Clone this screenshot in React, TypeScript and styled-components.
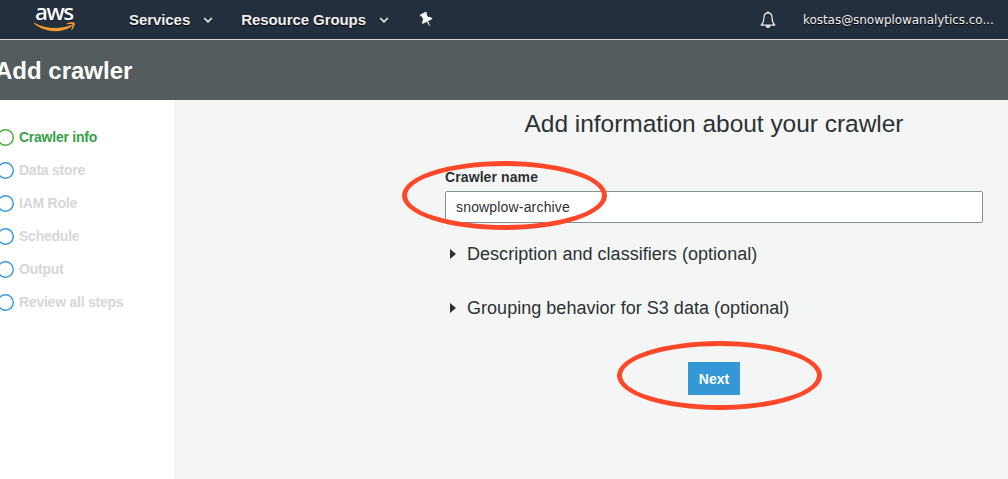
import React from "react";
import styled, { createGlobalStyle } from "styled-components";

const GlobalStyle = createGlobalStyle`
  *, *::before, *::after { box-sizing: border-box; }
  body {
    margin: 0;
    overflow: hidden;
    background: #f4f6f6;
    font-family: "Liberation Sans", Arial, sans-serif;
    color: #2d3133;
  }
`;

const Page = styled.div`
  position: relative;
  display: flex;
  flex-direction: column;
  height: 479px;
  overflow: hidden;
`;

const TopNav = styled.header`
  display: flex;
  align-items: center;
  height: 40px;
  flex: none;
  padding: 0 14px 0 34px;
  background: #242f3e;
  border-bottom: 1px solid #d0d1d6;
  color: #f0f0f0;
`;

const Logo = styled.div`
  display: flex;
  flex-direction: column;
  width: 42px;
  height: 39px;
  margin-right: 53px;
`;

const LogoText = styled.span`
  height: 22px;
  padding-left: 1px;
  font: 500 22.5px/24px "Noto Sans", sans-serif;
  letter-spacing: -1.4px;
  color: #fff;
`;

const NavItem = styled.div<{ $gap: number }>`
  display: flex;
  align-items: center;
  gap: 13px;
  margin-right: ${(p) => p.$gap}px;
  font-size: 15px;
  font-weight: bold;
  line-height: 18px;
  letter-spacing: -0.07px;
  white-space: nowrap;
  text-shadow: 0 1px 1px #000;
`;

const Account = styled.div`
  display: flex;
  align-items: center;
  gap: 27px;
  margin-left: auto;
`;

const Email = styled.span`
  width: 191px;
  font: 12px/18px "DejaVu Sans", Verdana, sans-serif;
  letter-spacing: -0.05px;
  white-space: nowrap;
  text-shadow: 0 1px 1px #000;
`;

const TitleBar = styled.div`
  display: flex;
  align-items: center;
  flex: none;
  height: 60px;
  background: #535b5c;
`;

const Title = styled.h1`
  margin: 2px 0 0 -5px;
  font-size: 24px;
  line-height: 28px;
  color: #fff;
`;

const Body = styled.div`
  display: flex;
  flex: 1;
`;

const Steps = styled.nav`
  display: flex;
  flex-direction: column;
  gap: 16px;
  width: 174px;
  padding-top: 29px;
  background: #fff;
`;

const Step = styled.div<{ $active?: boolean }>`
  display: flex;
  align-items: center;
  gap: 5px;
  height: 17px;
  margin-left: -3px;
  font-size: 14px;
  font-weight: bold;
  letter-spacing: -0.24px;
  line-height: 17px;
  color: ${(p) => (p.$active ? "#37a249" : "#d5d8d8")};
`;

const StepDot = styled.svg<{ $active?: boolean }>`
  width: 17px;
  height: 17px;
  fill: none;
  stroke: ${(p) => (p.$active ? "#4bae3f" : "#3c9bd9")};
  stroke-width: 1.5px;
`;

const Main = styled.main`
  display: flex;
  flex-direction: column;
  flex: 1;
  padding: 0 25px 0 271px;
`;

const Heading = styled.h2`
  align-self: center;
  margin: 10px 0 0;
  font-size: 24.5px;
  font-weight: normal;
  line-height: 28px;
  letter-spacing: -0.03px;
  white-space: nowrap;
`;

const Label = styled.label`
  margin-top: 30px;
  font-size: 14px;
  font-weight: bold;
  line-height: 18px;
  letter-spacing: 0.1px;
`;

const Input = styled.input`
  width: 538px;
  height: 32px;
  margin: 5px 0 0;
  padding: 0 10px;
  border: 1px solid #879192;
  border-radius: 2px;
  background: #fff;
  font: 14px "Liberation Sans", Arial, sans-serif;
  letter-spacing: 0.17px;
  color: #2d3133;
  outline: none;
`;

const Disclosure = styled.div<{ $top: number }>`
  display: flex;
  align-items: center;
  gap: 11px;
  margin-top: ${(p) => p.$top}px;
  padding-left: 5px;
  font-size: 18px;
  line-height: 22px;
  letter-spacing: 0.03px;
  white-space: nowrap;

  &::before {
    content: "";
    border-left: 6px solid #2d3133;
    border-top: 5px solid transparent;
    border-bottom: 5px solid transparent;
  }
`;

const NextButton = styled.button`
  align-self: center;
  width: 52px;
  height: 33px;
  margin: 43px 0 0;
  padding: 0;
  border: 0;
  background: #3498d6;
  color: #fff;
  font: bold 14px "Liberation Sans", Arial, sans-serif;
`;

const Marker = styled.div<{ $x: number; $y: number }>`
  position: absolute;
  left: ${(p) => p.$x}px;
  top: ${(p) => p.$y}px;
  width: 205px;
  height: 69px;
  border: 5px solid #ff4829;
  border-radius: 50%;
  pointer-events: none;
`;

const Chevron = () => (
  <svg width="10" height="8" viewBox="0 0 10 8">
    <path d="M1.2 2l3.8 3.8L8.8 2" fill="none" stroke="#e8e8e8" strokeWidth="1.7" />
  </svg>
);

const Smile = () => (
  <svg width="42" height="11" viewBox="0 0 42 11">
    <path
      d="M.6 .9C11 6.4 25 7.6 36.3 3.2c1.3-.5 2 .7.9 1.5C27 11.2 11 10.8.2 1.8c-.5-.5-.2-1.1.4-.9z"
      fill="#f79a2d"
    />
    <path
      d="M32.8 1.5C35.5-.4 40 .1 40.6.7c.6.8-.2 5.1-2.8 7.2-.4.3-.8.1-.6-.4.6-1.5 1.7-4.2 1.1-4.9-.6-.8-3.5-.6-5-.4-.6.1-.9-.4-.5-.7z"
      fill="#f79a2d"
    />
  </svg>
);

const Pin = () => (
  <svg width="13" height="15" viewBox="0 0 13 15">
    <g fill="#f5f5f5" transform="rotate(-27 6 7)">
      <path d="M2.3.4h7.2v2.3H8.6l.3 3.6c1.8.7 2.8 1.9 2.8 3.6H.6c0-1.7.9-2.9 2.6-3.6l.3-3.6H2.3z" />
      <path d="M5.4 9.8h1.5l-.4 4.9h-.7z" />
    </g>
  </svg>
);

const Bell = () => (
  <svg width="16" height="18" viewBox="0 0 16 18">
    <path
      d="M8 1.8c-2.7 0-4 2-4 4.4 0 4-.8 5.9-2.8 7.9h13.6c-2-2-2.8-3.9-2.8-7.9 0-2.4-1.3-4.4-4-4.4z"
      fill="none"
      stroke="#eee"
      strokeWidth="1.2"
      strokeLinejoin="round"
    />
    <path d="M7.2.5h1.6v1.7H7.2zM5.6 14.5h4.8C10.2 16.2 9.3 17 8 17s-2.2-.8-2.4-2.5z" fill="#eee" />
  </svg>
);

const steps = ["Crawler info", "Data store", "IAM Role", "Schedule", "Output", "Review all steps"];

export default function App() {
  return (
    <>
      <GlobalStyle />
      <Page>
        <TopNav>
          <Logo>
            <LogoText>aws</LogoText>
            <Smile />
          </Logo>
          <NavItem $gap={28}>
            Services <Chevron />
          </NavItem>
          <NavItem $gap={31}>
            Resource Groups <Chevron />
          </NavItem>
          <Pin />
          <Account>
            <Bell />
            <Email>kostas@snowplowanalytics.co...</Email>
          </Account>
        </TopNav>
        <TitleBar>
          <Title>Add crawler</Title>
        </TitleBar>
        <Body>
          <Steps>
            {steps.map((name, i) => (
              <Step key={name} $active={i === 0}>
                <StepDot $active={i === 0} viewBox="0 0 17 17">
                  <circle cx="8.5" cy="8.5" r="7.75" />
                </StepDot>
                {name}
              </Step>
            ))}
          </Steps>
          <Main>
            <Heading>Add information about your crawler</Heading>
            <Label htmlFor="crawler-name">Crawler name</Label>
            <Input id="crawler-name" defaultValue="snowplow-archive" />
            <Disclosure $top={20}>Description and classifiers (optional)</Disclosure>
            <Disclosure $top={32}>Grouping behavior for S3 data (optional)</Disclosure>
            <NextButton>Next</NextButton>
          </Main>
        </Body>
        <Marker $x={402} $y={161} />
        <Marker $x={617} $y={341} />
      </Page>
    </>
  );
}
